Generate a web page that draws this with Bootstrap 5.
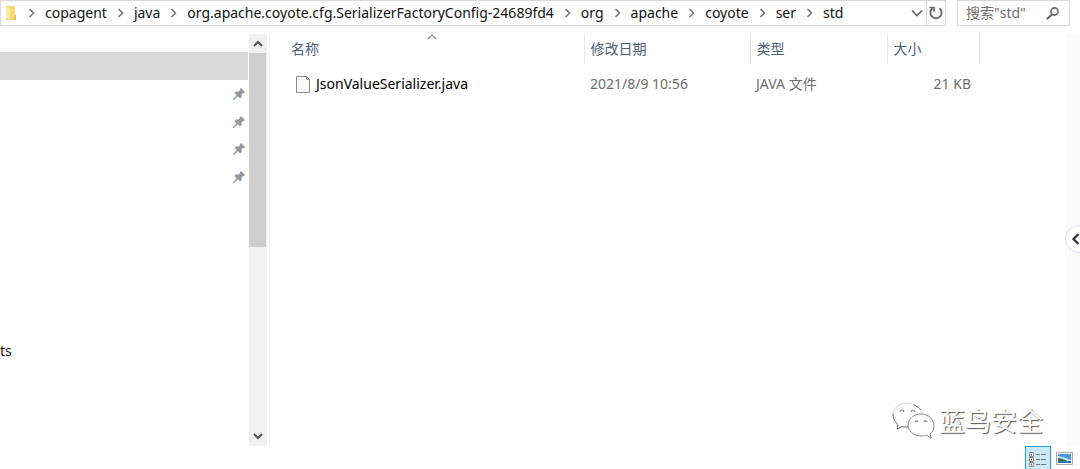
<!DOCTYPE html>
<html lang="zh-CN">
<head>
<meta charset="utf-8">
<meta name="viewport" content="width=device-width, initial-scale=1">
<title>std</title>
<link href="https://cdn.jsdelivr.net/npm/bootstrap@5.3.0/dist/css/bootstrap.min.css" rel="stylesheet">
<script src="https://cdn.jsdelivr.net/npm/bootstrap@5.3.0/dist/js/bootstrap.bundle.min.js" defer></script>
<style>
body { font-family: "Noto Sans", "Noto Sans CJK SC", sans-serif; font-size: 14px; line-height: 20px; color: #111; background: #fff; }
svg { display: block; flex: none; }
button { border: 0; background: none; padding: 0; color: inherit; }
.topbar { height: 26px; padding-right: 10px; gap: 11px; }
.address, .search { border: 1px solid #d9d9d9; }
.address a { color: #111; text-decoration: none; white-space: nowrap; }
.folder { width: 17px; padding-left: 4px; }
.sep { width: 27px; color: #777; }
.drop { width: 18px; color: #666; }
.reload { width: 19px; border-left: 1px solid #d9d9d9; color: #666; }
.search { width: 113px; color: #666; }
.search input { border: 0; outline: 0; padding: 0 0 0 8px; width: 84px; color: #6d6d6d; background: none; }
.search input::placeholder { color: #6d6d6d; opacity: 1; }
.panes { margin-top: 8px; }
.tree { width: 249px; padding-top: 18px; }
.tree li { height: 28px; padding-right: 4px; }
.tree li:nth-child(odd) { height: 27px; }
.tree li.picked { height: 28px; background: #d9d9d9; margin-right: 1px; }
.tree .cut { margin-top: 147px; }
.scroller { width: 18px; background: #f0f0f0; color: #555; }
.scroller button { height: 19px; }
.thumb { height: 194px; background: #cdcdcd; margin-right: 1px; }
.files { margin-left: 2px; border-left: 1px solid #f3f3f3; }
.files table { table-layout: fixed; width: 709px; color: #6d6d6d; }
.files th { position: relative; height: 30px; padding: 0 6px; font-weight: 400; color: #4c607a; border-right: 1px solid #e5e5e5; }
.files td { height: 40px; padding: 0 8px 0 6px; white-space: nowrap; }
.files th:first-child { padding-left: 21px; }
.files td:first-child { padding-left: 26px; color: #000; }
.filename { padding-left: 6px; }
.sortmark { position: absolute; top: 0; left: 50%; }
.edge { position: relative; overflow: hidden; width: 15px; background: #fbfbfb; }
.expand { position: absolute; top: 191px; left: 0; width: 28px; height: 28px; border: 1px solid #d7deea; border-radius: 50%; background: #fff; color: #333; padding-left: 5px; }
.views { height: 23px; padding-right: 3px; overflow: hidden; }
.views button { height: 26px; width: 26px; }
.views .on { border: 1px solid #26a0da; background: #cbe8f6; }
.brandmark { position: absolute; right: 37px; bottom: 28px; gap: 4px; color: #fff; }
.brandmark span { font-size: 26px; line-height: 40px; text-shadow: 1px 1px 1px #555; }
</style>
</head>
<body class="d-flex flex-column vh-100 overflow-hidden position-relative">
<svg class="d-none" aria-hidden="true">
  <symbol id="right" viewBox="0 0 24 24"><path d="M10 8l4 4-4 4" fill="none" stroke="currentColor" stroke-width="1.6"/></symbol>
  <symbol id="pin" viewBox="0 0 12 12"><path d="M8 0l4 4-1.200 1.200L10 5 8.500 6.500l.2 2.500L7 10.500 4.800 8.300 1 12H0v-1l3.700-3.800L1.500 5 3 3.300l2.500.2L7 2l-.2-.8z" fill="#8c9aa5"/></symbol>
</svg>
<header class="topbar d-flex flex-shrink-0">
  <nav class="address d-flex flex-grow-1 align-items-stretch" aria-label="路径">
    <div class="folder d-flex align-items-center"><svg width="12" height="16" viewBox="0 0 12 16"><path d="M1 1h9v9l1 1v4H1z" fill="#f8d775"/><path d="M1 1l4 2v12l-4-2z" fill="#ffe8a0"/><path d="M10 10h1v5h-2z" fill="#e9bd55"/></svg></div>
    <div class="d-flex align-items-center flex-grow-1">
      <svg class="sep" height="24"><use href="#right"/></svg><a href="#">copagent</a>
      <svg class="sep" height="24"><use href="#right"/></svg><a href="#">java</a>
      <svg class="sep" height="24"><use href="#right"/></svg><a href="#">org.apache.coyote.cfg.SerializerFactoryConfig-24689fd4</a>
      <svg class="sep" height="24"><use href="#right"/></svg><a href="#">org</a>
      <svg class="sep" height="24"><use href="#right"/></svg><a href="#">apache</a>
      <svg class="sep" height="24"><use href="#right"/></svg><a href="#">coyote</a>
      <svg class="sep" height="24"><use href="#right"/></svg><a href="#">ser</a>
      <svg class="sep" height="24"><use href="#right"/></svg><a href="#">std</a>
    </div>
    <button class="drop d-flex align-items-center justify-content-center" aria-label="历史"><svg width="12" height="8" viewBox="0 0 12 8"><path d="M1 1.500l5 5 5-5" fill="none" stroke="currentColor" stroke-width="1.700"/></svg></button>
    <button class="reload d-flex align-items-center justify-content-center" aria-label="刷新"><svg width="14" height="14" viewBox="0 0 14 14"><path d="M10.500 2.300A5.600 5.600 0 1 1 3.500 2.300" fill="none" stroke="currentColor" stroke-width="1.800"/><path d="M.5 1.500h4.500v4" fill="none" stroke="currentColor" stroke-width="1.600"/></svg></button>
  </nav>
  <div class="search d-flex align-items-center">
    <input type="text" placeholder='搜索"std"' aria-label="搜索">
    <button class="ms-1" aria-label="搜索"><svg width="13" height="13" viewBox="0 0 13 13" fill="none" stroke="currentColor"><circle cx="8.500" cy="4.500" r="3.600" stroke-width="1.600"/><path d="M6 7.200L.8 12.200" stroke-width="2"/></svg></button>
  </div>
</header>
<main class="panes d-flex flex-grow-1">
  <ul class="tree list-unstyled mb-0 flex-shrink-0">
    <li class="picked"></li>
    <li class="d-flex align-items-center justify-content-end"><svg width="12" height="12"><use href="#pin"/></svg></li>
    <li class="d-flex align-items-center justify-content-end"><svg width="12" height="12"><use href="#pin"/></svg></li>
    <li class="d-flex align-items-center justify-content-end"><svg width="12" height="12"><use href="#pin"/></svg></li>
    <li class="d-flex align-items-center justify-content-end"><svg width="12" height="12"><use href="#pin"/></svg></li>
    <li class="cut d-flex align-items-center">ts</li>
  </ul>
  <div class="scroller d-flex flex-column flex-shrink-0">
    <button class="d-flex align-items-center justify-content-center" aria-label="向上"><svg width="10" height="7" viewBox="0 0 10 7"><path d="M1 6l4-4 4 4" fill="none" stroke="currentColor" stroke-width="2"/></svg></button>
    <div class="thumb"></div>
    <button class="mt-auto d-flex align-items-center justify-content-center" aria-label="向下"><svg width="10" height="7" viewBox="0 0 10 7"><path d="M1 1l4 4 4-4" fill="none" stroke="currentColor" stroke-width="2"/></svg></button>
  </div>
  <section class="files flex-grow-1">
    <table>
      <colgroup><col style="width:314px"><col style="width:166px"><col style="width:137px"><col style="width:92px"></colgroup>
      <thead><tr><th>名称<svg class="sortmark" width="10" height="6" viewBox="0 0 10 6"><path d="M1 5l4-4 4 4" fill="none" stroke="#888" stroke-width="1.200"/></svg></th><th>修改日期</th><th>类型</th><th>大小</th></tr></thead>
      <tbody><tr>
        <td><div class="d-flex align-items-center"><svg width="14" height="17" viewBox="0 0 14 17"><path d="M.5.5h10l3 3v13H.5z" fill="#fafafa" stroke="#8b8b8b"/><path d="M10.500.5v3h3" fill="none" stroke="#999"/></svg><span class="filename">JsonValueSerializer.java</span></div></td>
        <td>2021/8/9 10:56</td><td>JAVA 文件</td><td class="text-end">21 KB</td>
      </tr></tbody>
    </table>
  </section>
  <aside class="edge flex-shrink-0"><button class="expand" aria-label="展开"><svg width="9" height="12" viewBox="0 0 9 12"><path d="M7.500 1l-5 5 5 5" fill="none" stroke="currentColor" stroke-width="2.200"/></svg></button></aside>
</main>
<footer class="views d-flex justify-content-end flex-shrink-0">
  <button class="on d-flex justify-content-center" aria-label="详细信息"><svg class="mt-1" width="18" height="16" viewBox="0 0 18 16"><path d="M.5 1.500h4v4h-4zM.5 6.500h4v4h-4zM.5 11.500h4v4h-4z" fill="#fff" stroke="#8b8b8b"/><path d="M2 3.500h1" stroke="#3474b5" stroke-width="2"/><path d="M2 8.500h1" stroke="#a85b31" stroke-width="2"/><path d="M2 13.500h1" stroke="#d92b20" stroke-width="2"/><path d="M7 3.500h4m1 0h5M7 8.500h4m1 0h5M7 13.500h4m1 0h5" stroke="#777" /></svg></button>
  <button class="d-flex justify-content-center" aria-label="大图标"><svg class="mt-1" width="17" height="15" viewBox="0 0 17 15"><path d="M.5 2.500h16v12H.5z" fill="#fff" stroke="#aaa"/><path d="M2 4h13v9H2z" fill="#4b96dc"/><path d="M2 6l5 1 8 3v1H2z" fill="#bfe3f5"/><path d="M2 8l5 1 4 2H2z" fill="#347756"/><path d="M2 11h13v2H2z" fill="#3571ac"/></svg></button>
</footer>
<div class="brandmark d-flex align-items-center" aria-hidden="true">
  <svg width="43" height="38" viewBox="0 0 43 38"><g fill="#fff" stroke="#8a8a8a" stroke-width="1" stroke-linejoin="round"><path d="M15 1C7 1 1 6.500 1 13c0 4 2 7 5 9.500L5 27l5-2.500c2 .6 4 .8 7 .5 8-.5 13-5.500 13-12S23 1 15 1z" stroke="#d2d2d2"/><path d="M1 12c0 5 2 8 5 10.500L5 27l5-2.500c2 .6 4 .8 7 .5M22 3c3 1 5 3 7 5" fill="none" stroke="#777"/><path d="M29 12c-7 0-13 5-13 11s6 11 13 11c2 0 3 0 5-1l5 3-1-4c3-2 4-5 4-8 0-7-6-12-13-12z"/></g><g fill="none" stroke="#888" stroke-width="1.200"><path d="M8 10a2 2 0 0 1 4 0M19 10a2 2 0 0 1 4 0M23 20a1.600 1.600 0 0 1 3 0M32 20a1.600 1.600 0 0 1 3 0"/></g></svg>
  <span>蓝鸟安全</span>
</div>
</body>
</html>
